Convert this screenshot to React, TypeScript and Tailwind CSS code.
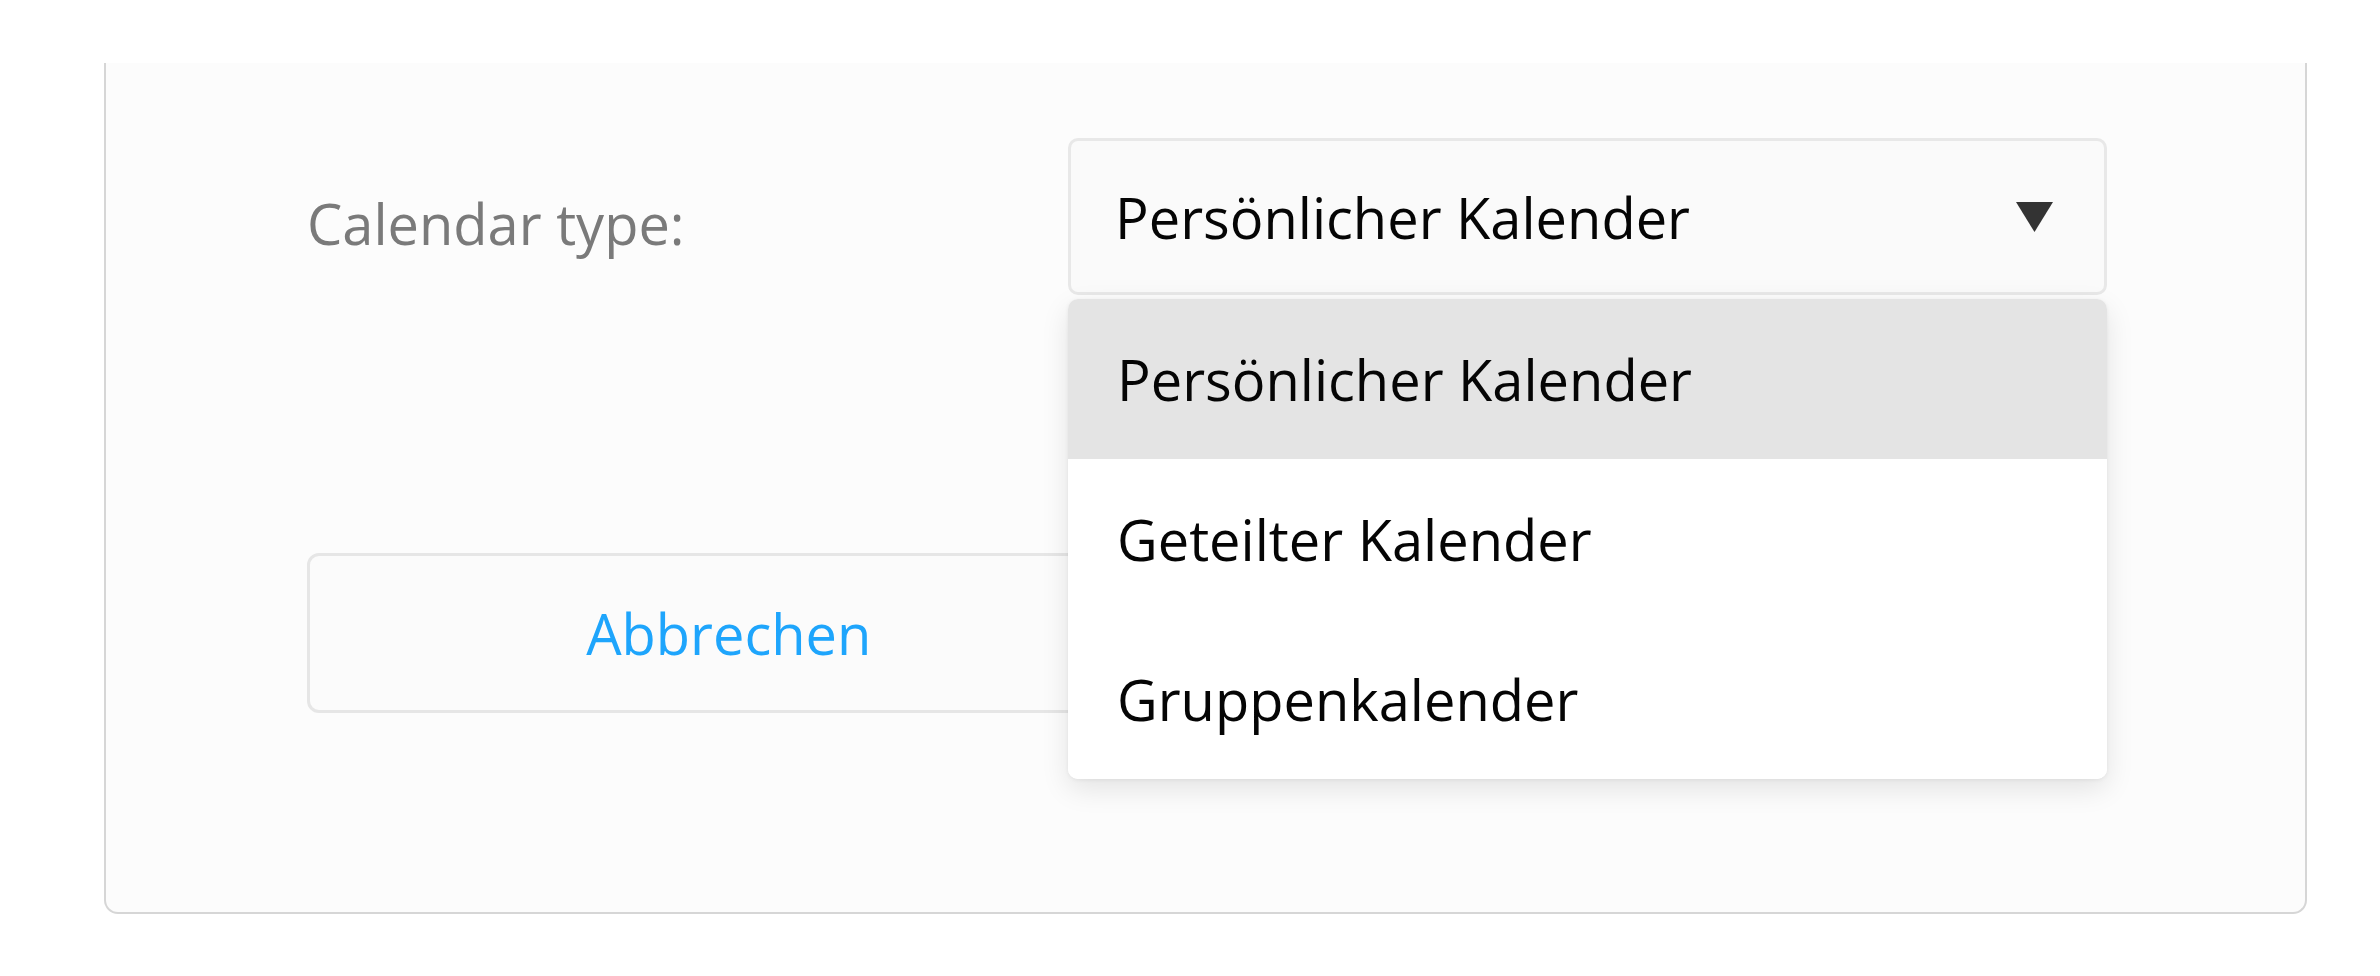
import { useState } from "react";

const OPTIONS = ["Persönlicher Kalender", "Geteilter Kalender", "Gruppenkalender"];

export default function App() {
  const [selected] = useState(OPTIONS[0]);
  const [open] = useState(true);

  return (
    <div
      className="min-h-screen bg-white pt-[63px]"
      style={{ fontFamily: '"Open Sans", "Noto Sans", sans-serif' }}
    >
      {/* Modal body */}
      <div className="ml-[104px] w-[2203px] bg-[#fcfcfc] border-x-2 border-b-2 border-[#d6d6d6] rounded-b-[14px] pt-[75px] pb-[199px] pl-[201px] pr-[198px]">
        <div className="flex items-start">
          <label className="flex-1 pt-[47px] text-[56px] leading-[76px] text-[#7a7a7a]">
            Calendar type:
          </label>

          <div className="relative w-[1039px]">
            <button className="flex h-[157px] w-full items-center justify-between rounded-[10px] border-[3px] border-[#e8e8e8] bg-[#fafafa] pl-[44px] pr-[51px] text-left text-[56px] leading-[76px] text-[#050505]">
              <span>{selected}</span>
              <svg width="37" height="30" viewBox="0 0 37 30">
                <polygon points="0,0 37,0 18.5,30" fill="#333333" />
              </svg>
            </button>

            {open && (
              <ul className="absolute left-0 right-0 top-[calc(100%+4px)] z-10 overflow-hidden rounded-[10px] bg-white shadow-[0_10px_28px_rgba(0,0,0,0.10),0_1px_4px_rgba(0,0,0,0.06)]">
                {OPTIONS.map((opt) => (
                  <li
                    key={opt}
                    className={`flex h-[160px] items-center pl-[49px] text-[56px] leading-[76px] text-[#050505] ${
                      opt === selected ? "bg-[#e4e4e4]" : "bg-white"
                    }`}
                  >
                    {opt}
                  </li>
                ))}
              </ul>
            )}
          </div>
        </div>

        {/* Actions */}
        <div className="mt-[258px] grid grid-cols-2 gap-[113px]">
          <button className="h-[160px] rounded-[12px] border-[3px] border-[#e6e6e6] bg-[#fbfbfb] text-[56px] leading-[76px] text-[#1ea5fc]">
            Abbrechen
          </button>
          <button className="h-[160px] rounded-[12px] border-[3px] border-[#d4ecf8] bg-[#fbfbfb] text-[56px] leading-[76px] text-[#1ea5fc]">
            Erstellen
          </button>
        </div>
      </div>
    </div>
  );
}
